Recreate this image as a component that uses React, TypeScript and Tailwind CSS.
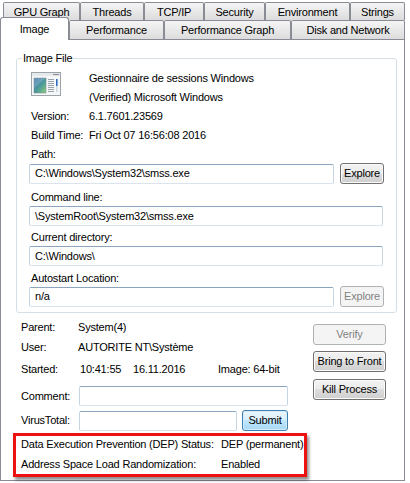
import React from "react";

const topTabs = [
  { label: "GPU Graph", w: "w-[77px]" },
  { label: "Threads", w: "w-[64px]" },
  { label: "TCP/IP", w: "w-[60px]" },
  { label: "Security", w: "w-[61px]" },
  { label: "Environment", w: "w-[85px]" },
  { label: "Strings", w: "w-[55px]" },
];

const bottomTabs = [
  { label: "Image", w: "w-[69px]", active: true },
  { label: "Performance", w: "w-[95px]" },
  { label: "Performance Graph", w: "w-[127px]" },
  { label: "Disk and Network", w: "w-[114px]" },
];

function Tab({ label, w, active }: { label: string; w: string; active?: boolean }) {
  if (active) {
    return (
      <div
        className={`${w} h-[23px] -mb-px self-end relative z-10 flex items-center justify-center border border-b-0 border-[#898c95] rounded-t-[3px] bg-white`}
      >
        {label}
      </div>
    );
  }
  return (
    <div
      className={`${w} h-full flex items-center justify-center pt-px border border-b-0 border-[#898c95] rounded-t-[2px] bg-linear-to-b from-[#f5f5f5] to-[#dcdcdc]`}
    >
      {label}
    </div>
  );
}

function TextBox({ value, w }: { value?: string; w: string }) {
  return (
    <div
      className={`${w} h-[20px] flex items-center pl-[5px] bg-white rounded-[2px] border border-[#c6d5e2] border-t-[#8ba5be] border-b-[#d9e4ee] whitespace-nowrap`}
    >
      {value}
    </div>
  );
}

function Button({
  label,
  w,
  disabled,
  primary,
}: {
  label: string;
  w: string;
  disabled?: boolean;
  primary?: boolean;
}) {
  // trois variantes : désactivé, par défaut (bleu), normal
  const look = disabled
    ? "border-[#adb2b5] bg-[#f4f4f4] text-[#838383]"
    : primary
      ? "border-[#3c7fb1] bg-[linear-gradient(#eaf6fd,#d9f0fc_50%,#bee6fd_50%,#a7d9f5)] shadow-[inset_0_0_0_1px_#d6ecf8]"
      : "border-[#707070] bg-[linear-gradient(#f2f2f2,#ebebeb_50%,#dddddd_50%,#cfcfcf)] shadow-[inset_0_0_0_1px_#fcfcfc]";
  return (
    <div className={`${w} h-[21px] flex items-center justify-center rounded-[3px] border whitespace-nowrap ${look}`}>
      {label}
    </div>
  );
}

function WindowIcon() {
  return (
    <svg width="30" height="24" viewBox="0 0 30 24" className="mt-[3px]">
      <defs>
        <linearGradient id="pane" x1="0" y1="0" x2="1" y2="1">
          <stop offset="0" stopColor="#3a74b4" />
          <stop offset="0.55" stopColor="#4e9c9a" />
          <stop offset="1" stopColor="#8fd07a" />
        </linearGradient>
      </defs>
      <rect x="0.5" y="0.5" width="29" height="23" fill="#f6f7f8" stroke="#9ca3a9" />
      <rect x="1" y="1" width="28" height="3" fill="#e6e9ec" />
      <circle cx="23" cy="2.5" r="0.7" fill="#5a5f66" />
      <circle cx="25" cy="2.5" r="0.7" fill="#5a5f66" />
      <circle cx="27" cy="2.5" r="0.7" fill="#5a5f66" />
      <rect x="3" y="6" width="12" height="15" fill="url(#pane)" stroke="#6f8090" strokeWidth="0.5" />
      <path d="M3 6 L15 6 L3 16 Z" fill="#ffffff" opacity="0.18" />
      <rect x="17" y="7" width="6" height="1" fill="#9aa3ab" />
      <rect x="17" y="9" width="6" height="1" fill="#9aa3ab" />
      <rect x="17" y="11" width="6" height="1" fill="#9aa3ab" />
      <rect x="17" y="13" width="6" height="1" fill="#9aa3ab" />
      <rect x="17" y="15" width="6" height="1" fill="#9aa3ab" />
      <rect x="17" y="17" width="6" height="1" fill="#9aa3ab" />
      <rect x="17" y="19" width="6" height="1" fill="#9aa3ab" />
      <rect x="25" y="7" width="1.6" height="7" fill="#2f6fc2" />
      <rect x="25" y="14" width="1.6" height="6" fill="#cfd8e0" />
    </svg>
  );
}

export default function App() {
  return (
    <div className="w-[410px] h-[483px] bg-white text-black text-[11px] leading-[13px] tracking-[-0.2px] font-['Tahoma','Liberation_Sans',Arial,sans-serif] overflow-hidden">
      <div className="pt-[2px]">
        <div className="flex h-[18px] pl-[3px]">
          {topTabs.map((t) => (
            <Tab key={t.label} label={t.label} w={t.w} />
          ))}
        </div>
        <div className="flex h-[19px] items-end">
          {bottomTabs.map((t) => (
            <Tab key={t.label} label={t.label} w={t.w} active={t.active} />
          ))}
        </div>
      </div>

      <div className="w-[405px] h-[442px] border border-[#898c95] bg-white">
        <fieldset className="ml-[15px] mt-[12px] w-[380px] border border-[#d5dfe5] rounded-[3px]">
          <legend className="ml-[5px] px-px leading-[13px]">Image File</legend>
          <div className="px-[12px] pb-[5px]">
            <div className="flex mt-[4px]">
              <div className="w-[60px] pl-[2px]">
                <WindowIcon />
              </div>
              <div>
                <div className="h-[19px] flex items-center">Gestionnaire de sessions Windows</div>
                <div className="h-[19px] flex items-center">(Verified) Microsoft Windows</div>
              </div>
            </div>
            <div className="flex h-[19px] items-center pl-[2px]">
              <span className="w-[58px]">Version:</span>
              <span>6.1.7601.23569</span>
            </div>
            <div className="flex h-[19px] items-center pl-[2px]">
              <span className="w-[58px]">Build Time:</span>
              <span>Fri Oct 07 16:56:08 2016</span>
            </div>

            <div className="mt-[3px] pl-[2px]">Path:</div>
            <div className="mt-[2px] flex h-[21px] items-center gap-[6px]">
              <TextBox w="w-[305px]" value={"C:\\Windows\\System32\\smss.exe"} />
              <Button w="w-[44px]" label="Explore" />
            </div>

            <div className="mt-[7px] pl-[2px]">Command line:</div>
            <div className="mt-[2px]">
              <TextBox w="w-[354px]" value={"\\SystemRoot\\System32\\smss.exe"} />
            </div>

            <div className="mt-[5px] pl-[2px]">Current directory:</div>
            <div className="mt-[2px]">
              <TextBox w="w-[354px]" value={"C:\\Windows\\"} />
            </div>

            <div className="mt-[6px] pl-[2px]">Autostart Location:</div>
            <div className="mt-[1px] flex h-[21px] items-center gap-[6px]">
              <TextBox w="w-[305px]" value="n/a" />
              <Button w="w-[44px]" label="Explore" disabled />
            </div>
          </div>
        </fieldset>

        <div className="flex pl-[12px]">
          <div className="w-[294px]">
            <div className="mt-[5px] h-[19px] flex items-center pl-[8px]">
              <span className="w-[57px]">Parent:</span>
              <span>System(4)</span>
            </div>
            <div className="h-[21px] flex items-center pl-[8px]">
              <span className="w-[57px]">User:</span>
              <span>{"AUTORITE NT\\Système"}</span>
            </div>
            <div className="h-[23px] flex items-center pl-[8px] whitespace-nowrap">
              <span className="w-[59px]">Started:</span>
              <span className="w-[53px]">10:41:55</span>
              <span className="w-[85px]">16.11.2016</span>
              <span>Image: 64-bit</span>
            </div>
            <div className="mt-[5px] h-[20px] flex items-center pl-[8px]">
              <span className="w-[58px]">Comment:</span>
              <TextBox w="w-[209px]" />
            </div>
            <div className="mt-[4px] h-[21px] flex items-center pl-[8px]">
              <span className="w-[58px]">VirusTotal:</span>
              <TextBox w="w-[158px]" />
              <div className="ml-[5px]">
                <Button w="w-[46px]" label="Submit" primary />
              </div>
            </div>

            <div className="mt-[2px] border-[3px] border-[#ee1111] shadow-[2px_3px_3px_rgba(0,0,0,0.45)] pl-[5px] pt-[2px] pb-[3px]">
              <div className="flex h-[13px] items-center">
                <span className="w-[200px]">Data Execution Prevention (DEP) Status:</span>
                <span>DEP (permanent)</span>
              </div>
              <div className="flex h-[13px] items-center mt-[7px]">
                <span className="w-[200px]">Address Space Load Randomization:</span>
                <span>Enabled</span>
              </div>
            </div>
          </div>

          <div className="ml-[6px] w-[73px] pt-[11px]">
            <Button w="w-[73px]" label="Verify" disabled />
            <div className="mt-[6px]">
              <Button w="w-[73px]" label="Bring to Front" />
            </div>
            <div className="mt-[7px]">
              <Button w="w-[73px]" label="Kill Process" />
            </div>
          </div>
        </div>
      </div>
    </div>
  );
}
